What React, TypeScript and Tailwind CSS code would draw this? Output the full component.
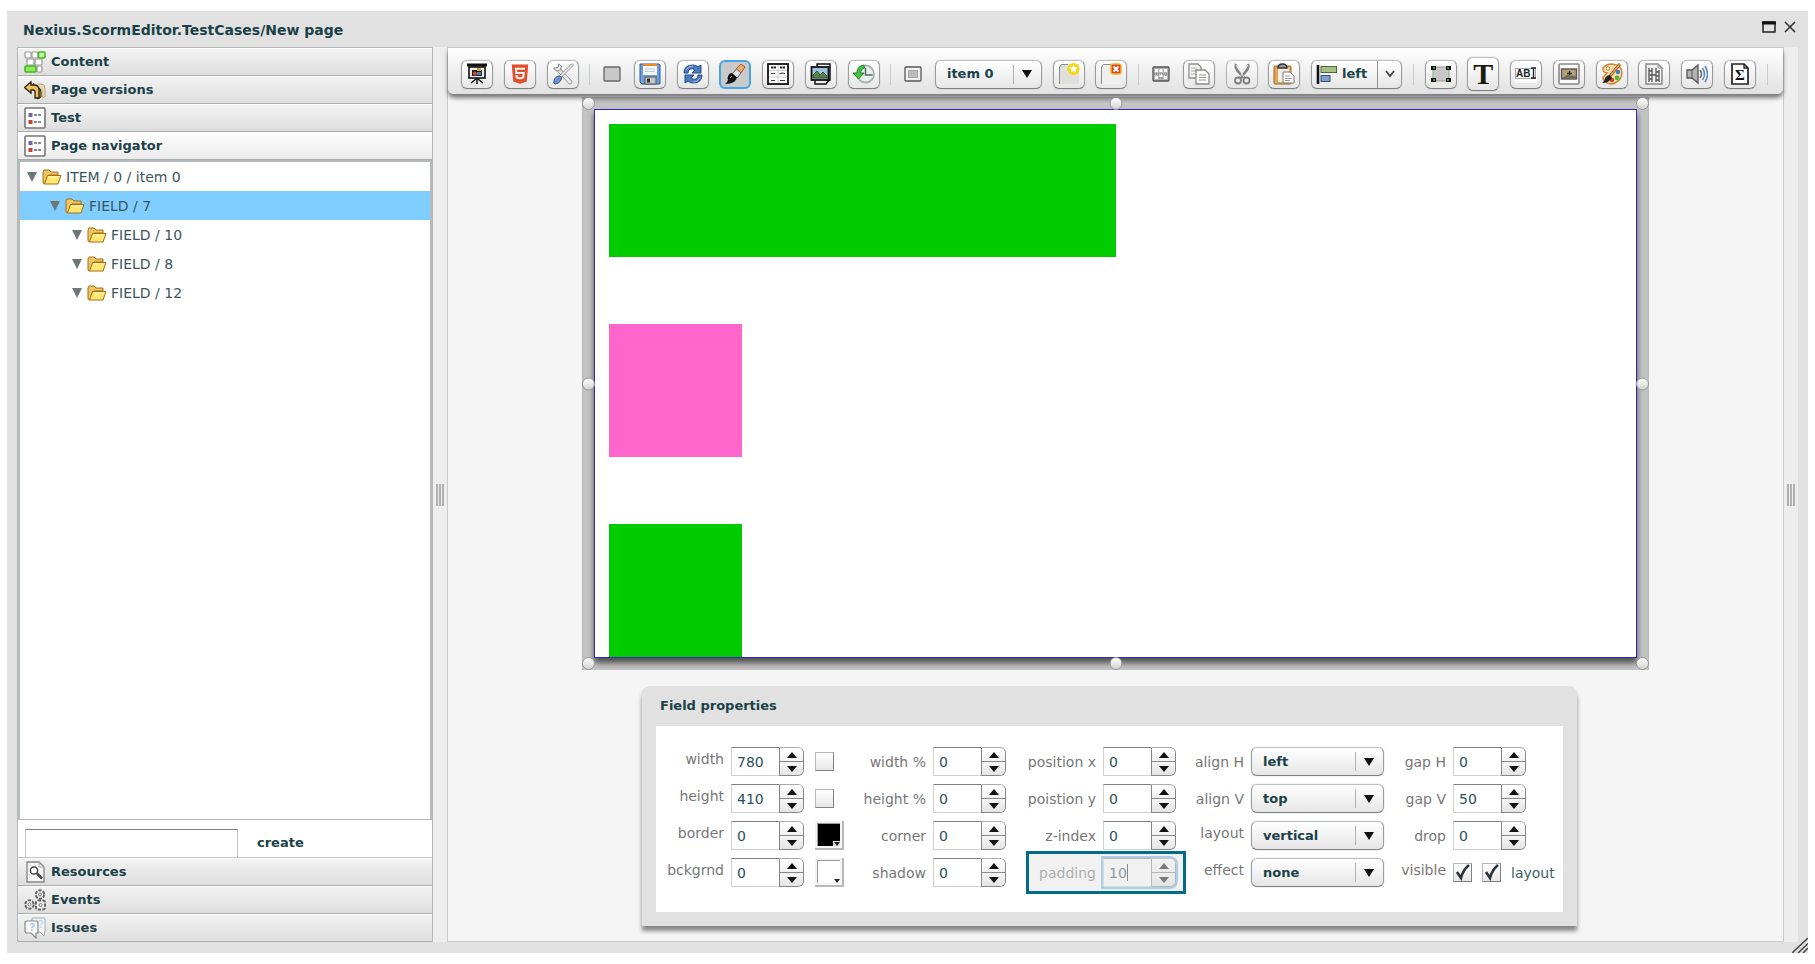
import { useState, type ReactNode } from "react";
import clsx from "clsx";
import { FaHtml5 } from "react-icons/fa";

/* ---------- Icons ---------- */

function Icon({ children, className = "size-[22px]" }: { children: ReactNode; className?: string }) {
  return (
    <svg viewBox="0 0 22 22" className={clsx("shrink-0", className)} fill="none" aria-hidden="true">
      {children}
    </svg>
  );
}

function ContentIcon() {
  return (
    <Icon>
      <g fill="#fff" stroke="#999" strokeWidth="1.2">
        <rect x="1" y="1" width="6" height="6" rx="1" />
        <rect x="8" y="1" width="6" height="6" rx="1" />
        <rect x="3" y="8" width="7" height="6" rx="1" />
        <rect x="11" y="8" width="7" height="6" rx="1" />
        <rect x="13" y="15" width="5" height="6" rx="1" />
      </g>
      <rect x="14.5" y="1" width="6.5" height="6" rx="1" fill="#c8f5a8" stroke="#43b81c" strokeWidth="1.6" />
      <rect x="1" y="15" width="11" height="6" rx="1" fill="#8fe860" stroke="#43b81c" strokeWidth="1.6" />
    </Icon>
  );
}

function VersionsIcon() {
  return (
    <Icon>
      <path d="M14 5h3q4 0 4 4v9h-3v-6q0-2-2-2" fill="#ecd9b0" stroke="#b5a27c" />
      <path d="M10 4l-2 3 5 1q4 1 4 5v5l-4 2" fill="#d9a945" stroke="#2a2112" />
      <path d="M0.5 8.5L7 3v3h3q5 0 5 5v8h-4v-6q0-2-2-2H7v3z" fill="#f0c15a" stroke="#2a2112" strokeWidth="1.3" />
    </Icon>
  );
}

function ListIcon() {
  return (
    <Icon>
      <rect x="1" y="1" width="20" height="20" rx="1" fill="#fff" stroke="#777" strokeWidth="1.6" />
      <rect x="4.5" y="6" width="4" height="4" fill="#6d65a8" />
      <rect x="4.5" y="13" width="4" height="4" fill="#c2452f" />
      <path d="M10 8h8M10 15h8" stroke="#666" strokeDasharray="3 1" strokeWidth="1.4" />
    </Icon>
  );
}

function ResourcesIcon() {
  return (
    <Icon>
      <path d="M3 1h12l5 5v15H3z" fill="#f4f4f4" stroke="#888" strokeWidth="1.4" />
      <path d="M15 1v5h5" stroke="#aaa" />
      <circle cx="10" cy="9.5" r="3.6" fill="#fff" stroke="#444" strokeWidth="1.5" />
      <path d="M13 12.500l5 5" stroke="#444" strokeWidth="2.5" />
    </Icon>
  );
}

function EventsIcon() {
  return (
    <Icon>
      <g fill="#f1f1f1" stroke="#666" strokeWidth="2" strokeDasharray="3.2 1.2">
        <circle cx="16" cy="5.5" r="4.2" />
        <circle cx="5.5" cy="15.5" r="4.2" />
        <rect x="12" y="11.5" width="9" height="9" rx="2" />
      </g>
      <g fill="#fff" stroke="#777">
        <circle cx="16" cy="5.5" r="1.5" />
        <circle cx="5.5" cy="15.5" r="1.5" />
        <circle cx="16.5" cy="16" r="1.5" />
      </g>
    </Icon>
  );
}

function IssuesIcon() {
  return (
    <Icon>
      <path d="M8 1h12q1 0 1 1v12l-1 5-4-4H8z" fill="#f5f5f5" stroke="#aaa" />
      <path d="M3 4h9q2 0 2 2v10h-2v5l-5-5H3q-2 0-2-2V6q0-2 2-2z" fill="#fafafa" stroke="#888" strokeWidth="1.2" />
      <text x="5" y="14" fontSize="11" fontWeight="700" fill="#a9cdf0" fontFamily="DejaVu Sans, sans-serif">?</text>
      <text x="14" y="11" fontSize="10" fontWeight="700" fill="#c5ddf4" fontFamily="DejaVu Sans, sans-serif">?</text>
    </Icon>
  );
}

function FolderIcon() {
  return (
    <svg viewBox="0 0 20 16" className="h-4 w-5 shrink-0" aria-hidden="true">
      <path d="M1 14V3l1-2h5l2 2h7v3h-9L3 15z" fill="#efc461" stroke="#a56f16" strokeLinejoin="round" />
      <path d="M5.5 6.500H19L16 15H2.500z" fill="#ffe770" stroke="#a56f16" strokeLinejoin="round" />
      <path d="M6.5 8h10.500" stroke="#fff6c4" />
    </svg>
  );
}

function PresentationIcon() {
  return (
    <Icon>
      <path d="M1 2h20" stroke="#111" strokeWidth="3" />
      <rect x="3" y="4" width="16" height="11" fill="#eee" stroke="#111" strokeWidth="1.6" />
      <rect x="6" y="7" width="10" height="6" fill="#222" />
      <circle cx="9" cy="10.5" r="2" fill="#d8432f" />
      <rect x="11" y="9" width="4" height="3" fill="#4a7fb5" />
      <rect x="11" y="5" width="4" height="3" fill="#e2a72e" />
      <path d="M11 15v6M10 16l-5 4M12 16l5 4" stroke="#111" strokeWidth="1.5" />
    </Icon>
  );
}

function ToolsIcon() {
  return (
    <Icon>
      <path d="M6 6l12 13" stroke="#888" strokeWidth="4.5" strokeLinecap="round" />
      <path d="M6 6l12 13" stroke="#eee" strokeWidth="3" strokeLinecap="round" />
      <path d="M1.5 5l3 3 4-1 1-4-3-2v3l-2 1z" fill="#eee" stroke="#888" />
      <path d="M8 14L20 2" stroke="#888" strokeWidth="3" strokeLinecap="round" />
      <path d="M8 14L20 2" stroke="#f6f6f6" strokeWidth="1.6" strokeLinecap="round" />
      <path d="M2 18q1-5 6-5 3 1 1 4-2 4-6 4-2-1-1-3z" fill="#6c93cc" stroke="#345a96" />
    </Icon>
  );
}

function SaveIcon() {
  return (
    <Icon>
      <path d="M1 1h19l1 1v19H3l-2-2z" fill="#6f9fd8" stroke="#2f5b95" />
      <rect x="4" y="1" width="14" height="11" fill="#f5f8fb" />
      <rect x="4" y="1" width="14" height="2" fill="#f08a1d" />
      <path d="M6 6h10M6 8.500h10" stroke="#bccbdc" />
      <rect x="6" y="14" width="11" height="7" fill="#c5c8cb" stroke="#555" />
      <rect x="8" y="15.5" width="3" height="4" fill="#333" />
    </Icon>
  );
}

function RefreshIcon() {
  return (
    <Icon>
      <path d="M2 10q0-8 9-8 3 0 5 2l3-2v8h-9l3-3q-2-2-5-1-2 1-2 4z" fill="#4b7cbd" stroke="#274f8a" />
      <path d="M20 12q0 8-9 8-3 0-5-2l-3 2v-8h9l-3 3q2 2 5 1 2-1 2-4z" fill="#4b7cbd" stroke="#274f8a" />
      <path d="M4 7q2-4 7-4M18 15q-2 4-7 4" stroke="#9dc0ea" />
    </Icon>
  );
}

function BrushIcon() {
  return (
    <Icon>
      <path d="M17 1l4 3-4 6-5-4z" fill="#e9a96f" stroke="#9a6032" />
      <path d="M12.500 6l4.500 4-4 5-5-4z" fill="#e2e2e2" stroke="#666" />
      <path d="M8 10l5 4.500q-1 6-12 6.500 4-3 2.500-6 1-5 4.500-5z" fill="#161616" />
      <path d="M6 15l2-2" stroke="#999" />
    </Icon>
  );
}

function TableIcon() {
  return (
    <Icon>
      <rect x="1" y="1" width="20" height="20" fill="#fff" stroke="#111" strokeWidth="1.8" />
      <path d="M4 4.500h5M13 4.500h5" stroke="#222" strokeWidth="2" strokeDasharray="2.3 .5" />
      <path d="M2 7.500h18M2 14h18M11 2v18" stroke="#ccc" />
      <path d="M4 10.500h4M12.500 11l2.500-1 3 .5M4 17.500h4M13 17.500h5" stroke="#444" strokeWidth="1.2" />
    </Icon>
  );
}

function PicturesIcon() {
  return (
    <Icon>
      <path d="M7 4V1h13v16l-2 1" fill="#fff" stroke="#111" strokeWidth="1.5" />
      <path d="M5 18v3h11l3-4" fill="#eee" stroke="#111" strokeWidth="1.5" />
      <rect x="1.5" y="4" width="17" height="13" fill="#9cc3df" stroke="#111" strokeWidth="1.8" />
      <path d="M3 15v-3l4-4 3 4 3-3 4 4v2z" fill="#568248" stroke="#2f5128" />
    </Icon>
  );
}

function HistoryIcon() {
  return (
    <Icon>
      <circle cx="12.5" cy="11" r="8.5" fill="#e9f0ee" stroke="#a9b5b2" strokeWidth="1.8" />
      <path d="M12.500 5v7h7" stroke="#566" strokeWidth="1.5" />
      <path d="M11 2Q4 3 4 10H0l5.500 6L11 10H7.500q0-4 4-5z" fill="#46c04b" stroke="#23862a" />
    </Icon>
  );
}

function NewItemIcon() {
  return (
    <Icon>
      <path d="M2 21V3l2-2h17v20z" fill="#dfe0dc" />
      <path d="M1.500 21V4l2-2.500H10" stroke="#8c8c8c" />
      <circle cx="15.5" cy="6" r="6" fill="#f6d70d" />
      <path d="M15.500 1.500l1.300 2.700 3 .4-2.200 2 .6 3-2.700-1.500L12.800 9.600l.6-3-2.200-2 3-.4z" fill="#fff" />
    </Icon>
  );
}

function DeleteItemIcon() {
  return (
    <Icon>
      <path d="M2 21V3l2-2h17v20z" fill="#efefee" />
      <path d="M1.500 21V4l2-2.500H11" stroke="#8c8c8c" />
      <rect x="11" y="1" width="10" height="10" rx="2" fill="#df4023" stroke="#f1b422" strokeWidth="1.5" />
      <path d="M13.500 3.500l5 5M18.500 3.500l-5 5" stroke="#fff" strokeWidth="2" />
    </Icon>
  );
}

function CopyIcon() {
  return (
    <Icon>
      <path d="M1 1h9l3 3v11H1z" fill="#f6f6f3" stroke="#8c8c88" strokeWidth="1.3" />
      <path d="M3 5h6M3 8h6M3 11h6" stroke="#aaa" />
      <path d="M8 7h9l4 4v10H8z" fill="#fbfbf9" stroke="#8c8c88" strokeWidth="1.3" />
      <path d="M11 12h7M11 14.500h7M11 17h7" stroke="#999" />
    </Icon>
  );
}

function CutIcon() {
  return (
    <Icon>
      <path d="M5 1q-1 3 1 6l7 8M17 1q1 3-1 6l-7 8" stroke="#555" strokeWidth="2.8" />
      <path d="M5 2l8 12M17 2L9 14" stroke="#e6e6e6" />
      <circle cx="7" cy="17.5" r="3" stroke="#555" strokeWidth="1.8" />
      <circle cx="15.5" cy="17.5" r="3" stroke="#555" strokeWidth="1.8" />
    </Icon>
  );
}

function PasteIcon() {
  return (
    <Icon>
      <rect x="1" y="3" width="17" height="18" rx="1" fill="#e3a552" stroke="#9a6a26" />
      <rect x="5" y="5" width="11" height="14" fill="#f0efe9" />
      <path d="M5 5q0-4 4.500-4T14 5z" fill="#999" stroke="#333" strokeWidth="1.4" />
      <path d="M10 9h7l4 4v7H10z" fill="#fff" stroke="#777" />
      <path d="M12 13h5M12 15.500h7M12 17.500h5" stroke="#999" />
    </Icon>
  );
}

function AlignLeftIcon() {
  return (
    <Icon>
      <path d="M2 2v19" stroke="#111" strokeWidth="2.6" />
      <rect x="5" y="3.5" width="15.5" height="6" fill="#a4c088" stroke="#4d6a35" />
      <rect x="5" y="12.5" width="9" height="6" fill="#7f9fca" stroke="#335481" />
    </Icon>
  );
}

function FieldIcon() {
  return (
    <Icon>
      <rect x="3" y="4" width="16" height="14" fill="#c8c8c8" stroke="#999" />
      <path d="M1 3h5v4H1zM16 3h5v4h-5zM1 15h5v4H1zM16 15h5v4h-5z" fill="#111" />
      <path d="M3 4h2v2H3zM17 4h2v2h-2zM3 16h2v2H3zM17 16h2v2h-2z" fill="#2f9a2a" />
    </Icon>
  );
}

function InputIcon() {
  return (
    <Icon>
      <rect x="0" y="2" width="22" height="18" fill="#fdfdfd" />
      <rect x="0.5" y="5.5" width="20" height="10" stroke="#aaa" />
      <text x="1" y="14" fontSize="10" fontWeight="700" fill="#222" fontFamily="Liberation Sans, sans-serif">AB</text>
      <path d="M16 5h5M18.500 5v10M16 15h5" stroke="#222" strokeWidth="1.4" />
    </Icon>
  );
}

function ImageIcon() {
  return (
    <Icon>
      <rect x="1" y="1" width="20" height="20" rx="1" fill="#fafafa" stroke="#888" strokeWidth="1.6" />
      <rect x="3.5" y="6" width="15" height="10" fill="#b5a174" stroke="#555" strokeWidth="1.4" />
      <path d="M4 15l5-3 9 1v2H4z" fill="#6a6f55" />
      <path d="M11.500 12V8M9 10.500h5" stroke="#333" strokeWidth="1.5" />
    </Icon>
  );
}

function PaletteIcon() {
  return (
    <Icon>
      <path d="M11 1q10 1 10 9-1 10-11 11-8-1-8-7l4-4Q1 9 2 5q3-4 9-4z" fill="#f7dfb4" stroke="#c98a33" strokeWidth="1.5" />
      <circle cx="17" cy="9" r="2.2" fill="#3f79d0" />
      <circle cx="16" cy="15" r="2.4" fill="#4bbb35" />
      <circle cx="11" cy="17" r="2.2" fill="#df3a2b" />
      <circle cx="7" cy="5.5" r="1.8" fill="#fff" stroke="#c98a33" />
      <path d="M19 1L9 13" stroke="#8d5a26" strokeWidth="3" />
      <path d="M19 1L9 13" stroke="#e3a154" strokeWidth="1.5" />
      <path d="M9 12l2 3q-3 5-10 5 3-2 3-5 2-3 5-3z" fill="#222" />
    </Icon>
  );
}

function VideoIcon() {
  return (
    <Icon>
      <path d="M3 1h12l4 4v16H3z" fill="#f3f3f3" stroke="#888" strokeWidth="1.5" />
      <path d="M15 1v4h4" stroke="#999" />
      <path d="M6 5v14M16 7v12M9 5v14M13 5v14M6 8h3M6 12h3M6 16h3M13 9h3M13 13h3M13 17h3M9 12h4" stroke="#555" strokeWidth="1.3" />
    </Icon>
  );
}

function SoundIcon() {
  return (
    <Icon>
      <path d="M1 7h5l6-5v18l-6-5H1z" fill="#b5b5b5" stroke="#555" strokeWidth="1.3" />
      <path d="M6 7v8" stroke="#555" />
      <path d="M14 7q3 4 0 8" stroke="#666" strokeWidth="1.5" />
      <path d="M16.500 5q4 6 0 12M19 3q5 8 0 16" stroke="#5f88c6" strokeWidth="1.5" />
    </Icon>
  );
}

function SigmaIcon() {
  return (
    <Icon>
      <path d="M3 1h12l4 4v16H3z" fill="#fff" stroke="#222" strokeWidth="1.7" />
      <path d="M15 1v4h4" stroke="#222" strokeWidth="1.3" />
      <text x="6" y="17" fontSize="15" fontWeight="700" fill="#111" fontFamily="Liberation Serif, serif">Σ</text>
    </Icon>
  );
}

/* ---------- Toolbar ---------- */

const buttonFace = "border border-t-[#bcc0c1] border-x-[#9a9d9e] border-b-[#7d8081] bg-linear-to-b from-white to-[#e6e6e6] shadow-[0_0_1px_#8a8d8e]";

function ToolButton({ label, children, active, faded, tall }: { label: string; children: ReactNode; active?: boolean; faded?: boolean; tall?: boolean }) {
  return (
    <button
      aria-label={label}
      className={clsx(
        "flex w-8 shrink-0 items-center justify-center rounded-[6px]",
        tall ? "h-[34px]" : "h-[29px]",
        active ? "border-2 border-[#42a5e8] bg-[#c9c9c9]" : buttonFace,
        faded && "opacity-70"
      )}
    >
      {children}
    </button>
  );
}

function FlatButton({ label, children }: { label: string; children: ReactNode }) {
  return (
    <button aria-label={label} className="flex h-[29px] w-[22px] shrink-0 items-center justify-center">
      <svg viewBox="0 0 18 16" className="h-4 w-[18px]" fill="none" aria-hidden="true">
        {children}
      </svg>
    </button>
  );
}

function Separator() {
  return <span className="h-[21px] w-px shrink-0 bg-[#c4cccc]" />;
}

function DropArrow() {
  return (
    <svg viewBox="0 0 10 8" className="h-2 w-[10px] fill-[#111]" aria-hidden="true">
      <path d="M0 0h10L5 8z" />
    </svg>
  );
}

function SelectBox({ id, value, options, className }: { id: string; value: string; options: string[]; className?: string }) {
  return (
    <span className={clsx("relative block", className)}>
      <select
        id={id}
        aria-label={id}
        defaultValue={value}
        className={clsx("h-[29px] w-full appearance-none rounded-[6px] pl-[11px] text-[13px] font-bold text-[#1b4148]", buttonFace)}
      >
        {options.map((o) => (
          <option key={o}>{o}</option>
        ))}
      </select>
      <span className="pointer-events-none absolute inset-y-0 right-[10px] flex items-center gap-2">
        <span className="h-[19px] w-px bg-[#aeb2b3]" />
        <DropArrow />
      </span>
    </span>
  );
}

function Toolbar() {
  return (
    <div className="relative z-10 flex h-[46px] items-center justify-between rounded-b-[6px] bg-linear-to-b from-white to-[#e1e1e1] pt-[6px] pr-[15px] pl-[13px] shadow-[0_4px_4px_rgba(0,0,0,0.5)]">
      <ToolButton label="Preview"><PresentationIcon /></ToolButton>
      <ToolButton label="HTML5 preview"><FaHtml5 className="size-[22px] text-[#e44d26]" /></ToolButton>
      <ToolButton label="Settings"><ToolsIcon /></ToolButton>
      <Separator />
      <FlatButton label="Page">
        <rect x="1" y="1" width="16" height="14" rx="1" fill="#c8c8c8" stroke="#666" strokeWidth="1.3" />
      </FlatButton>
      <ToolButton label="Save"><SaveIcon /></ToolButton>
      <ToolButton label="Refresh"><RefreshIcon /></ToolButton>
      <ToolButton label="Style" active><BrushIcon /></ToolButton>
      <ToolButton label="Table"><TableIcon /></ToolButton>
      <ToolButton label="Gallery"><PicturesIcon /></ToolButton>
      <ToolButton label="History"><HistoryIcon /></ToolButton>
      <Separator />
      <FlatButton label="Item">
        <rect x="1" y="1" width="16" height="14" rx="1" fill="#f2f2f2" stroke="#555" strokeWidth="1.3" />
        <rect x="4.5" y="4.5" width="9" height="7" fill="#bbb" stroke="#777" strokeDasharray="1 1" />
      </FlatButton>
      <SelectBox id="item" value="item 0" options={["item 0"]} className="w-[107px] shrink-0" />
      <ToolButton label="New item"><NewItemIcon /></ToolButton>
      <ToolButton label="Delete item"><DeleteItemIcon /></ToolButton>
      <Separator />
      <FlatButton label="Grid">
        <rect x="1" y="1" width="16" height="14" rx="1" fill="#b5b5b5" stroke="#555" strokeWidth="1.3" />
        <path d="M3 3h3v3H3zM7.500 3h3v3h-3zM12 3h3v3h-3zM3 10h3v3H3zM12 10h3v3h-3zM7.500 8h3v3h-3z" fill="#fff" />
        <path d="M2 8h14M7 12h4" stroke="#666" strokeDasharray="1 1" />
      </FlatButton>
      <ToolButton label="Copy"><CopyIcon /></ToolButton>
      <ToolButton label="Cut" faded><CutIcon /></ToolButton>
      <ToolButton label="Paste"><PasteIcon /></ToolButton>
      <div className={clsx("flex h-[29px] w-[91px] shrink-0 rounded-[6px]", buttonFace)}>
        <button className="flex flex-1 items-center gap-1 pl-1 text-[13px] font-bold">
          <AlignLeftIcon />
          left
        </button>
        <button aria-label="More alignments" className="flex w-6 items-center justify-center border-l border-[#8f9293]">
          <svg viewBox="0 0 10 8" className="h-2 w-[10px]" fill="none" aria-hidden="true">
            <path d="M1 1l4 5 4-5" stroke="#444" strokeWidth="1.8" />
          </svg>
        </button>
      </div>
      <Separator />
      <ToolButton label="Field"><FieldIcon /></ToolButton>
      <ToolButton label="Text" tall>
        <span className="font-['Liberation_Serif',serif] text-[30px] leading-8 font-bold text-[#1c1a10]">T</span>
      </ToolButton>
      <ToolButton label="Text input"><InputIcon /></ToolButton>
      <ToolButton label="Image"><ImageIcon /></ToolButton>
      <ToolButton label="Drawing"><PaletteIcon /></ToolButton>
      <ToolButton label="Video"><VideoIcon /></ToolButton>
      <ToolButton label="Sound"><SoundIcon /></ToolButton>
      <ToolButton label="Formula"><SigmaIcon /></ToolButton>
      <Separator />
    </div>
  );
}

/* ---------- Left sidebar ---------- */

function SectionHeader({ icon, title, open }: { icon: ReactNode; title: string; open?: boolean }) {
  return (
    <button
      className={clsx(
        "flex h-7 shrink-0 items-center gap-[5px] border-b border-[#a9acac] bg-linear-to-b pl-[6px] text-[13px] font-bold shadow-[inset_0_1px_0_#fff]",
        open ? "from-white to-[#ebebeb]" : "from-[#f3f3f3] to-[#dedede]"
      )}
    >
      {icon}
      {title}
    </button>
  );
}

const TREE = [
  { label: "ITEM / 0 / item 0", indent: "pl-[7px]" },
  { label: "FIELD / 7", indent: "pl-[30px]" },
  { label: "FIELD / 10", indent: "pl-[52px]" },
  { label: "FIELD / 8", indent: "pl-[52px]" },
  { label: "FIELD / 12", indent: "pl-[52px]" },
];

function Sidebar() {
  const [selected, setSelected] = useState("FIELD / 7");

  return (
    <aside className="flex w-[416px] shrink-0 flex-col border-x border-t border-[#b4b8b8] bg-white">
      <SectionHeader icon={<ContentIcon />} title="Content" />
      <SectionHeader icon={<VersionsIcon />} title="Page versions" />
      <SectionHeader icon={<ListIcon />} title="Test" />
      <SectionHeader icon={<ListIcon />} title="Page navigator" open />
      <ul className="flex-1 border-x-2 border-t-2 border-b border-[#b7babc] text-sm text-[#3d545c]">
        {TREE.map((node) => (
          <li key={node.label}>
            <button
              onClick={() => setSelected(node.label)}
              className={clsx("flex h-[29px] w-full items-center", node.indent, node.label === selected && "bg-[#7fceff]")}
            >
              <svg viewBox="0 0 10 10" className="mr-[5px] size-[10px] fill-[#6d7777]" aria-hidden="true">
                <path d="M0 0h10L5 10z" />
              </svg>
              <FolderIcon />
              <span className="ml-1">{node.label}</span>
            </button>
          </li>
        ))}
      </ul>
      <div className="flex h-[38px] shrink-0 items-end gap-[19px] border-b border-[#c3c6c6] pl-[7px]">
        <input aria-label="New node name" className="h-7 w-[213px] border-x border-t border-x-[#c6c8c8] border-t-[#7f7f7f] px-2 text-sm outline-none" />
        <button className="h-7 text-[13px] font-bold">create</button>
      </div>
      <SectionHeader icon={<ResourcesIcon />} title="Resources" />
      <SectionHeader icon={<EventsIcon />} title="Events" />
      <SectionHeader icon={<IssuesIcon />} title="Issues" />
    </aside>
  );
}

function Splitter() {
  return (
    <div className="flex w-[14px] shrink-0 items-center justify-center gap-px bg-[#ededed]">
      <span className="h-[22px] w-[2px] bg-[#b0b0b0]" />
      <span className="h-[22px] w-[2px] bg-[#b0b0b0]" />
      <span className="h-[22px] w-[2px] bg-[#b0b0b0]" />
    </div>
  );
}

/* ---------- Canvas ---------- */

const HANDLES = [
  "left-0 top-0",
  "left-1/2 -translate-x-1/2 top-0",
  "right-0 top-0",
  "left-0 top-1/2 -translate-y-1/2",
  "right-0 top-1/2 -translate-y-1/2",
  "left-0 bottom-0",
  "left-1/2 -translate-x-1/2 bottom-0",
  "right-0 bottom-0",
];

function Canvas() {
  return (
    <div className="relative z-20 mt-[3px] w-[1067px] max-w-full">
      <div className="overflow-hidden bg-[#c4c4c4] p-3 shadow-[inset_0_4px_4px_-2px_rgba(0,0,0,0.4)]">
        <div className="flex h-[549px] flex-col gap-[67px] overflow-hidden border border-[#3028c0] bg-white px-[14px] pt-[14px] shadow-[0_5px_6px_rgba(0,0,0,0.6)]">
          <div className="h-[133px] w-[507px] shrink-0 bg-[#00cc00]" />
          <div className="size-[133px] shrink-0 bg-[#ff66cc]" />
          <div className="size-[133px] shrink-0 bg-[#00cc00]" />
        </div>
      </div>
      {HANDLES.map((pos) => (
        <span key={pos} className={clsx("absolute size-[13px] rounded-full border border-[#999] bg-linear-to-b from-white to-[#d2d2d2]", pos)} />
      ))}
    </div>
  );
}

/* ---------- Field properties ---------- */

function FieldLabel({ htmlFor, children, raised }: { htmlFor: string; children: ReactNode; raised?: boolean }) {
  return (
    <label htmlFor={htmlFor} className={clsx("text-right text-sm whitespace-nowrap text-[#777]", raised && "pb-[5px]")}>
      {children}
    </label>
  );
}

function Stepper({ id, value, focused }: { id: string; value: number; focused?: boolean }) {
  const [current, setCurrent] = useState(value);

  return (
    <div className={clsx("flex h-[29px] w-[73px] shrink-0 rounded-r-[6px]", focused && "shadow-[0_0_0_2px_#6dbdf2]")}>
      <input
        id={id}
        value={current}
        onChange={(e) => setCurrent(Number(e.target.value) || 0)}
        className="h-full w-12 border border-r-0 border-[#d0d2d2] border-t-[#7f7f7f] bg-white pl-[5px] text-sm text-[#2c5059] outline-none"
      />
      <div className="flex w-[25px] flex-col overflow-hidden rounded-r-[6px] border border-[#858888] border-t-[#a9acac]">
        <button aria-label={`Increase ${id}`} onClick={() => setCurrent(current + 1)} className="flex flex-1 items-center justify-center border-b border-[#858888] bg-linear-to-b from-white to-[#f2f2f2]">
          <svg viewBox="0 0 10 6" className="h-[6px] w-[10px] fill-[#111]" aria-hidden="true"><path d="M0 6h10L5 0z" /></svg>
        </button>
        <button aria-label={`Decrease ${id}`} onClick={() => setCurrent(current - 1)} className="flex flex-1 items-center justify-center bg-linear-to-b from-[#f6f6f6] to-[#e4e4e4]">
          <svg viewBox="0 0 10 6" className="h-[6px] w-[10px] fill-[#111]" aria-hidden="true"><path d="M0 0h10L5 6z" /></svg>
        </button>
      </div>
    </div>
  );
}

function CheckBox({ id, label, checked }: { id: string; label?: string; checked?: boolean }) {
  return (
    <span className="relative size-[19px] shrink-0">
      <input
        id={id}
        type="checkbox"
        aria-label={label}
        defaultChecked={checked}
        className="peer block size-[19px] appearance-none border border-[#b4b8b8] border-r-[#7f8282] border-b-[#7f8282] bg-linear-to-b from-white to-[#e6e6e6]"
      />
      <svg viewBox="0 0 19 19" className="pointer-events-none absolute inset-0 hidden size-[19px] peer-checked:block" fill="none" aria-hidden="true">
        <path d="M4 9l4 6Q10 7 16 2" stroke="#2b333c" strokeWidth="2.6" />
      </svg>
    </span>
  );
}

function ColorPicker({ label, dark }: { label: string; dark?: boolean }) {
  return (
    <button aria-label={label} className="flex size-[29px] shrink-0 items-center justify-center border-r-2 border-b-2 border-[#b7babc] bg-[#f4f4f4]">
      <span className={clsx("flex size-[23px] items-end justify-end border-t border-l border-[#999]", dark ? "bg-black" : "bg-white")}>
        <span className={clsx("flex h-[5px] w-[7px] items-end justify-center", dark ? "bg-[#ddd]" : "bg-white")}>
          <svg viewBox="0 0 6 4" className="h-1 w-[6px] fill-[#222]" aria-hidden="true"><path d="M0 0h6L3 4z" /></svg>
        </span>
      </span>
    </button>
  );
}

function FieldProperties() {
  return (
    <section className="w-[935px] rounded-t-[8px] bg-[#e1e1e1] px-[14px] pb-[14px] shadow-[0_5px_4px_rgba(0,0,0,0.45)]">
      <h2 className="flex h-10 items-center pl-1 text-[13px] font-bold">Field properties</h2>
      <div className="grid h-[186px] grid-cols-[68px_112px_76px_73px_83px_73px_61px_133px_55px_110px] content-start items-center gap-x-[7px] gap-y-2 bg-white pt-[21px]">
        <FieldLabel htmlFor="width" raised>width</FieldLabel>
        <div className="flex items-center gap-[11px]">
          <Stepper id="width" value={780} />
          <CheckBox id="width-auto" label="Automatic width" />
        </div>
        <FieldLabel htmlFor="width-pct">width %</FieldLabel>
        <Stepper id="width-pct" value={0} />
        <FieldLabel htmlFor="pos-x">position x</FieldLabel>
        <Stepper id="pos-x" value={0} />
        <FieldLabel htmlFor="align-h">align H</FieldLabel>
        <SelectBox id="align-h" value="left" options={["left", "center", "right"]} />
        <FieldLabel htmlFor="gap-h">gap H</FieldLabel>
        <Stepper id="gap-h" value={0} />

        <FieldLabel htmlFor="height" raised>height</FieldLabel>
        <div className="flex items-center gap-[11px]">
          <Stepper id="height" value={410} />
          <CheckBox id="height-auto" label="Automatic height" />
        </div>
        <FieldLabel htmlFor="height-pct">height %</FieldLabel>
        <Stepper id="height-pct" value={0} />
        <FieldLabel htmlFor="pos-y">poistion y</FieldLabel>
        <Stepper id="pos-y" value={0} />
        <FieldLabel htmlFor="align-v">align V</FieldLabel>
        <SelectBox id="align-v" value="top" options={["top", "middle", "bottom"]} />
        <FieldLabel htmlFor="gap-v">gap V</FieldLabel>
        <Stepper id="gap-v" value={50} />

        <FieldLabel htmlFor="border" raised>border</FieldLabel>
        <div className="flex items-center gap-[11px]">
          <Stepper id="border" value={0} />
          <ColorPicker label="Border color" dark />
        </div>
        <FieldLabel htmlFor="corner">corner</FieldLabel>
        <Stepper id="corner" value={0} />
        <FieldLabel htmlFor="z-index">z-index</FieldLabel>
        <Stepper id="z-index" value={0} />
        <FieldLabel htmlFor="layout" raised>layout</FieldLabel>
        <SelectBox id="layout" value="vertical" options={["vertical", "horizontal"]} />
        <FieldLabel htmlFor="drop">drop</FieldLabel>
        <Stepper id="drop" value={0} />

        <FieldLabel htmlFor="bckgrnd" raised>bckgrnd</FieldLabel>
        <div className="flex items-center gap-[11px]">
          <Stepper id="bckgrnd" value={0} />
          <ColorPicker label="Background color" />
        </div>
        <FieldLabel htmlFor="shadow">shadow</FieldLabel>
        <Stepper id="shadow" value={0} />
        <div className="relative col-span-2 flex items-center justify-end gap-[7px]">
          <FieldLabel htmlFor="padding">padding</FieldLabel>
          <Stepper id="padding" value={10} focused />
          {/* text caret and the highlight frame over the focused property */}
          <span className="pointer-events-none absolute top-[6px] right-12 h-[17px] w-px bg-[#333]" />
          <span className="pointer-events-none absolute -inset-y-[7px] -right-[10px] left-[13px] border-[3px] border-[#006c85] bg-[#e4e4e4]/50" />
        </div>
        <FieldLabel htmlFor="effect" raised>effect</FieldLabel>
        <SelectBox id="effect" value="none" options={["none", "fade"]} />
        <FieldLabel htmlFor="visible" raised>visible</FieldLabel>
        <div className="flex items-center gap-[10px]">
          <CheckBox id="visible" checked />
          <CheckBox id="in-layout" checked />
          <label htmlFor="in-layout" className="text-sm text-[#3d5f66]">layout</label>
        </div>
      </div>
    </section>
  );
}

/* ---------- Window ---------- */

export default function App() {
  return (
    <div className="flex min-h-screen flex-col bg-white px-[7px] py-[11px] font-['DejaVu_Sans',Verdana,sans-serif] text-[#1b4148]">
      <div className="relative flex flex-1 flex-col bg-[#e1e1e1] px-[10px] pb-[11px]">
        <header className="flex h-9 items-center justify-between pt-px pl-[6px]">
          <h1 className="text-sm font-bold">Nexius.ScormEditor.TestCases/New page</h1>
          <div className="flex items-center gap-2 pr-[2px] pb-[5px]">
            <button aria-label="Maximize">
              <svg viewBox="0 0 14 12" className="h-3 w-[14px]" fill="none" aria-hidden="true">
                <path d="M1 1h12v10H1z" stroke="#222" strokeWidth="1.5" />
                <path d="M0 2h14" stroke="#111" strokeWidth="3" />
              </svg>
            </button>
            <button aria-label="Close">
              <svg viewBox="0 0 12 12" className="size-3" fill="none" aria-hidden="true">
                <path d="M1 1l10 10M11 1L1 11" stroke="#333" strokeWidth="1.6" />
              </svg>
            </button>
          </div>
        </header>
        <div className="flex flex-1">
          <Sidebar />
          <Splitter />
          <main className="flex min-w-0 flex-1 flex-col border border-[#c6caca] bg-[#f5f5f5]">
            <Toolbar />
            <div className="flex flex-1 flex-col items-center">
              <Canvas />
              <div className="mt-4 pr-3">
                <FieldProperties />
              </div>
            </div>
          </main>
          <Splitter />
        </div>
        <svg viewBox="0 0 16 16" className="absolute right-0 bottom-0 size-4" fill="none" aria-hidden="true">
          <path d="M0 16L16 1M6 16l10-9.500M11 16l5-5" stroke="#444" strokeWidth="1.5" />
        </svg>
      </div>
    </div>
  );
}
